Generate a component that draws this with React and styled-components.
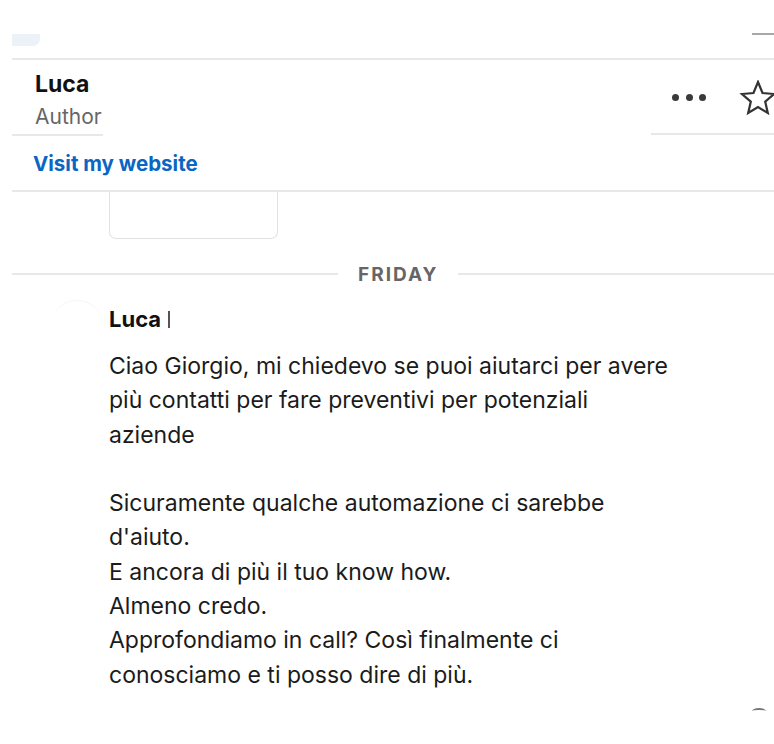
import styled, { createGlobalStyle } from "styled-components";

const GlobalStyle = createGlobalStyle`
  body {
    margin: 0;
    background: #fff;
    font-family: Inter, "Noto Sans", "Liberation Sans", sans-serif;
    color: #1b1b1b;
  }
`

const Page = styled.div`
  width: 774px;
  height: 744px;
  overflow: hidden;
  position: relative;
`

const TopBar = styled.div`
  height: 58px;
  margin-left: 12px;
  display: flex;
  justify-content: space-between;
  align-items: flex-start;
  border-bottom: 2px solid #e8e8e8;
`

const Pill = styled.div`
  margin-top: 34px;
  width: 28px;
  height: 12px;
  background: #edf2f8;
  border-radius: 0 0 7px 0;
`

const Dash = styled.div`
  margin-top: 33px;
  width: 22px;
  height: 2px;
  background: #a8a8a8;
`

const Header = styled.div`
  display: grid;
  grid-template-columns: 91px 1fr 123px;
  margin-left: 12px;
`

const Who = styled.div`
  padding: 9px 0 0 23px;
  overflow: hidden;
  white-space: nowrap;
  border-bottom: 2px solid #e8e8e8;
`

const Name = styled.div`
  font-size: ${p => p.size || 23}px;
  line-height: 30px;
  font-weight: 700;
  color: #111;
  display: flex;
  align-items: center;
`

const Title = styled.div`
  font-size: 21px;
  line-height: 35px;
  color: #666;
`

const Actions = styled.div`
  display: flex;
  align-items: center;
  justify-content: flex-end;
  gap: 33px;
  padding-top: 2px;
  height: 71px;
  border-bottom: 2px solid #e8e8e8;
  margin-right: -3px;
`

const Dots = styled.div`
  display: flex;
  gap: 6.5px;
  span {
    width: 7px;
    height: 7px;
    border-radius: 50%;
    background: #3a3a3a;
  }
`

const Website = styled.div`
  height: 54px;
  margin-left: 12px;
  padding-left: 21px;
  display: flex;
  align-items: center;
  border-bottom: 2px solid #e8e8e8;
  a {
    color: #0a66c2;
    font-weight: 700;
    font-size: 20.5px;
    text-decoration: none;
  }
`

const AttachmentEdge = styled.div`
  width: 167px;
  height: 46px;
  margin-left: 109px;
  border: 1.5px solid #e2e2e2;
  border-top: none;
  border-radius: 0 0 7px 7px;
`

const DateRow = styled.div`
  display: grid;
  grid-template-columns: 326px auto 1fr;
  align-items: center;
  gap: 20px;
  margin: 23px 0 0 12px;
  height: 24px;
  &::before, &::after {
    content: "";
    height: 2px;
    background: #e8e8e8;
  }
  span {
    font-size: 19px;
    font-weight: 700;
    letter-spacing: 2px;
    color: #666;
  }
`

const Message = styled.div`
  display: flex;
  margin-top: 18px;
  position: relative;
`

const Avatar = styled.div`
  width: 54px;
  height: 54px;
  margin: -4px 0 0 50px;
  border-radius: 50%;
  border-top: 1px solid #f6f6f6;
  flex-shrink: 0;
`

const Body = styled.div`
  margin-left: 5px;
`

const Cut = styled.span`
  display: inline-block;
  width: 2px;
  height: 17px;
  margin-left: 7px;
  background: #555;
`

const Text = styled.p`
  margin: 15px 0 0;
  font-size: 23px;
  line-height: 34.3px;
  white-space: pre-line;
  color: #1b1b1b;
`

const Scroll = styled.div`
  position: absolute;
  right: 8px;
  bottom: 30px;
  width: 14px;
  height: 4px;
  border-top: 2px solid #777;
  border-radius: 50% 50% 0 0;
`

const Star = () => (
  <svg width="38" height="36" viewBox="0 0 38 36">
    <polygon
      points="19,2 23.5,13 35,14 26.2,21.6 28.8,33 19,27 9.2,33 11.8,21.6 3,14 14.5,13"
      fill="none"
      stroke="#333"
      strokeWidth="2.2"
      strokeLinejoin="miter"
    />
  </svg>
)

const message = `Ciao Giorgio, mi chiedevo se puoi aiutarci per avere
più contatti per fare preventivi per potenziali
aziende

Sicuramente qualche automazione ci sarebbe
d'aiuto.
E ancora di più il tuo know how.
Almeno credo.
Approfondiamo in call? Così finalmente ci
conosciamo e ti posso dire di più.`

export default function App() {
  return (
    <>
      <GlobalStyle />
      <Page>
        <TopBar>
          <Pill />
          <Dash />
        </TopBar>

        <Header>
          <Who>
            <Name>Luca</Name>
            <Title>Author</Title>
          </Who>
          <div />
          <Actions>
            <Dots><span /><span /><span /></Dots>
            <Star />
          </Actions>
        </Header>

        <Website>
          <a href="#">Visit my website</a>
        </Website>

        <AttachmentEdge />

        <DateRow>
          <span>FRIDAY</span>
        </DateRow>

        <Message>
          <Avatar />
          <Body>
            <Name size={22}>Luca<Cut /></Name>
            <Text>{message}</Text>
          </Body>
        </Message>

        <Scroll />
      </Page>
    </>
  )
}
